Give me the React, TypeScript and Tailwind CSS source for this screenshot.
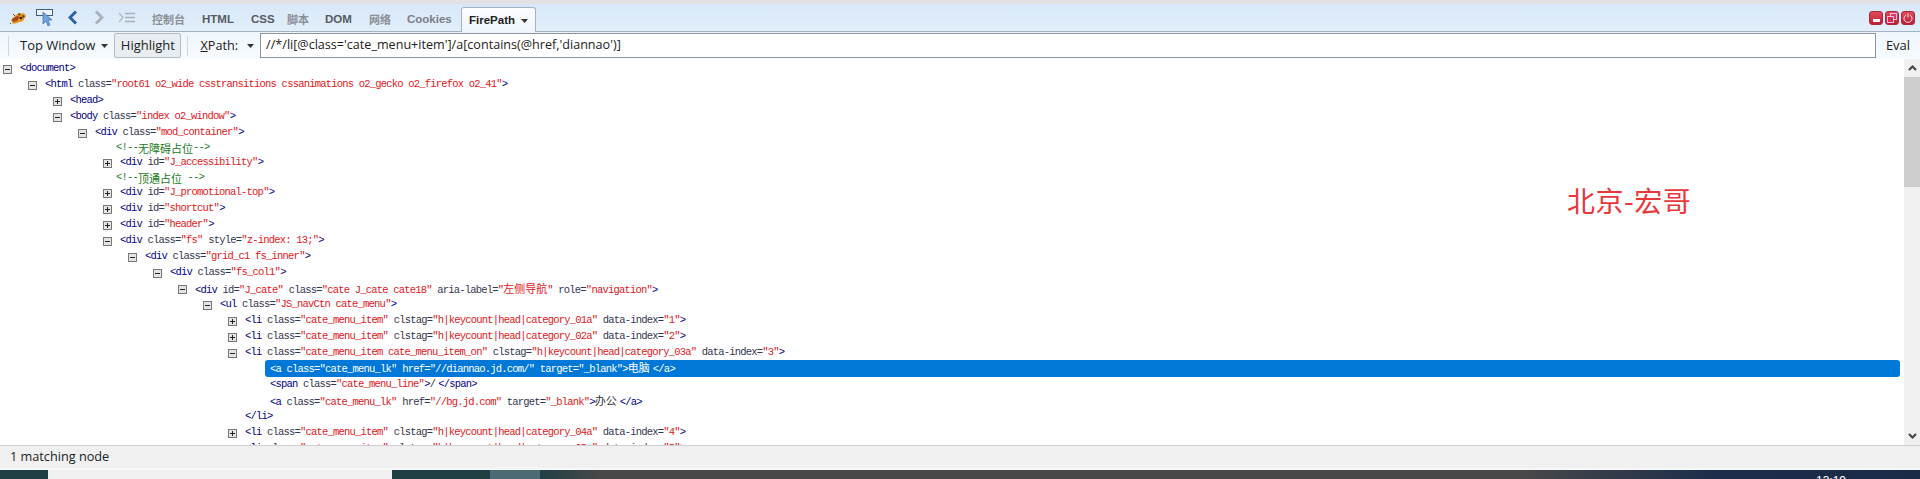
import type { ReactNode } from "react";

const uiFont = "font-['Open_Sans','Noto_Sans_CJK_SC',sans-serif]";

type Row = {
  level: number;
  toggle?: "+" | "-";
  comment?: string;
  name?: string;
  attrs?: [string, string][];
  text?: string;
  closeName?: string;
  selected?: boolean;
};

const rows: Row[] = [
  { level: 0, toggle: "-", name: "document" },
  {
    level: 1,
    toggle: "-",
    name: "html",
    attrs: [["class", "root61 o2_wide csstransitions cssanimations o2_gecko o2_firefox o2_41"]],
  },
  { level: 2, toggle: "+", name: "head" },
  { level: 2, toggle: "-", name: "body", attrs: [["class", "index o2_window"]] },
  { level: 3, toggle: "-", name: "div", attrs: [["class", "mod_container"]] },
  { level: 4, comment: "<!--无障碍占位-->" },
  { level: 4, toggle: "+", name: "div", attrs: [["id", "J_accessibility"]] },
  { level: 4, comment: "<!--顶通占位 -->" },
  { level: 4, toggle: "+", name: "div", attrs: [["id", "J_promotional-top"]] },
  { level: 4, toggle: "+", name: "div", attrs: [["id", "shortcut"]] },
  { level: 4, toggle: "+", name: "div", attrs: [["id", "header"]] },
  { level: 4, toggle: "-", name: "div", attrs: [["class", "fs"], ["style", "z-index: 13;"]] },
  { level: 5, toggle: "-", name: "div", attrs: [["class", "grid_c1 fs_inner"]] },
  { level: 6, toggle: "-", name: "div", attrs: [["class", "fs_col1"]] },
  {
    level: 7,
    toggle: "-",
    name: "div",
    attrs: [["id", "J_cate"], ["class", "cate J_cate cate18"], ["aria-label", "左侧导航"], ["role", "navigation"]],
  },
  { level: 8, toggle: "-", name: "ul", attrs: [["class", "JS_navCtn cate_menu"]] },
  {
    level: 9,
    toggle: "+",
    name: "li",
    attrs: [["class", "cate_menu_item"], ["clstag", "h|keycount|head|category_01a"], ["data-index", "1"]],
  },
  {
    level: 9,
    toggle: "+",
    name: "li",
    attrs: [["class", "cate_menu_item"], ["clstag", "h|keycount|head|category_02a"], ["data-index", "2"]],
  },
  {
    level: 9,
    toggle: "-",
    name: "li",
    attrs: [["class", "cate_menu_item cate_menu_item_on"], ["clstag", "h|keycount|head|category_03a"], ["data-index", "3"]],
  },
  {
    level: 10,
    selected: true,
    name: "a",
    attrs: [["class", "cate_menu_lk"], ["href", "//diannao.jd.com/"], ["target", "_blank"]],
    text: "电脑",
    closeName: "a",
  },
  { level: 10, name: "span", attrs: [["class", "cate_menu_line"]], text: "/", closeName: "span" },
  {
    level: 10,
    name: "a",
    attrs: [["class", "cate_menu_lk"], ["href", "//bg.jd.com"], ["target", "_blank"]],
    text: "办公",
    closeName: "a",
  },
  { level: 9, closeName: "li" },
  {
    level: 9,
    toggle: "+",
    name: "li",
    attrs: [["class", "cate_menu_item"], ["clstag", "h|keycount|head|category_04a"], ["data-index", "4"]],
  },
  {
    level: 9,
    toggle: "+",
    name: "li",
    attrs: [["class", "cate_menu_item"], ["clstag", "h|keycount|head|category_05a"], ["data-index", "5"]],
  },
];

function Cjk({ children }: { children: ReactNode }) {
  return <span className="font-['Noto_Sans_CJK_SC',sans-serif] text-[11px] tracking-normal">{children}</span>;
}

// the reference font is 5.5px wide per latin char, cjk runs need their own span
function mixed(value: string) {
  return value.split(/([\u4e00-\u9fff]+)/).map((part, i) =>
    /[\u4e00-\u9fff]/.test(part) ? <Cjk key={i}>{part}</Cjk> : part,
  );
}

function Toggle({ type }: { type: "+" | "-" }) {
  return (
    <svg width="9" height="9" viewBox="0 0 9 9" className="shrink-0 mr-2">
      <rect x="0.5" y="0.5" width="8" height="8" fill="#e4e4e4" stroke="#777" />
      <path d={type === "+" ? "M2 4.5h5M4.5 2v5" : "M2 4.5h5"} stroke="#222" strokeWidth="1" />
    </svg>
  );
}

function Markup({ row }: { row: Row }) {
  const sel = row.selected;
  const tag = sel ? "text-white" : "text-[#000088]";
  const attr = sel ? "text-white" : "text-[#33364f]";
  const val = sel ? "text-white" : "text-[#e0181c]";
  return (
    <span className="whitespace-pre">
      {row.name && (
        <span className={tag}>
          {"<"}
          {row.name}
        </span>
      )}
      {row.attrs?.map(([k, v]) => (
        <span key={k}>
          <span className={attr}>
            {" "}
            {k}=
          </span>
          <span className={val}>
            "{mixed(v)}"
          </span>
        </span>
      ))}
      {row.name && <span className={tag}>{">"}</span>}
      {row.text && <span className={`pr-[3px] ${sel ? "text-white" : "text-[#333]"}`}>{mixed(row.text)}</span>}
      {row.closeName && (
        <span className={tag}>
          {"</"}
          {row.closeName}
          {">"}
        </span>
      )}
    </span>
  );
}

function TreeRow({ row }: { row: Row }) {
  const left = 3 + row.level * 25;
  if (row.comment) {
    return (
      <div className="h-[14px] flex items-center whitespace-pre text-[#1a7a1a]" style={{ paddingLeft: left + 13 }}>
        {mixed(row.comment)}
      </div>
    );
  }
  if (row.selected) {
    return (
      <div className="h-4 flex items-center">
        <div
          className="h-[17px] flex-1 flex items-center bg-[#0078d7] rounded-[3px] mr-1 pl-[5px] -translate-y-px"
          style={{ marginLeft: left + 12 }}
        >
          <Markup row={row} />
        </div>
      </div>
    );
  }
  return (
    <div className="h-4 flex items-center" style={{ paddingLeft: row.toggle ? left : left + 17 }}>
      {row.toggle && <Toggle type={row.toggle} />}
      <Markup row={row} />
    </div>
  );
}

function FirebugIcon() {
  return (
    <svg width="18" height="14" viewBox="0 0 18 14" className="shrink-0">
      <path d="M2 9 8 3l7-1 2 3-3 5-6 2-4 1z" fill="#e89a1e" />
      <path d="M3 8l5-3 3 1-3 4-4 1z" fill="#a8481a" />
      <path d="M9 2l3 1-2 2zM13 4l3 1-2 2z" fill="#5a3210" />
      <circle cx="12" cy="7" r="1.3" fill="#3a2008" />
      <path d="M4 3l2 2M2 12l-1 1" stroke="#7a4a1a" />
    </svg>
  );
}

function InspectIcon() {
  return (
    <svg width="18" height="18" viewBox="0 0 18 18" className="shrink-0">
      <rect x="0.5" y="0.5" width="16" height="6" fill="#eaf3fb" stroke="#3d5f80" />
      <path d="M7 3v12l3-3 2 5 2-1-2-5h4z" fill="#6fa4e0" stroke="#3f6fa8" strokeWidth="0.7" />
    </svg>
  );
}

function Chevron({ dir, color }: { dir: "left" | "right"; color: string }) {
  return (
    <svg width="10" height="15" viewBox="0 0 10 15" className="shrink-0">
      <path d={dir === "left" ? "M8 1.5 2 7.5l6 6" : "M2 1.5l6 6-6 6"} fill="none" stroke={color} strokeWidth="3" />
    </svg>
  );
}

function CommandIcon() {
  return (
    <svg width="17" height="11" viewBox="0 0 17 11" className="shrink-0">
      <path d="M1 1l4 4.5L1 10" fill="none" stroke="#b5bcc4" strokeWidth="1.4" />
      <path d="M7 1.5h10M7 5.5h10M7 9.5h10" stroke="#a8afb8" strokeWidth="1.4" />
    </svg>
  );
}

function WinButton({ children }: { children: ReactNode }) {
  return (
    <div className="w-[14px] h-[14px] rounded-[3px] border border-[#a8283c] bg-gradient-to-b from-[#e04a5c] to-[#c01c34] flex items-center justify-center">
      {children}
    </div>
  );
}

function Caret({ className }: { className: string }) {
  return (
    <svg width="7" height="4" viewBox="0 0 7 4" className={className}>
      <path d="M0 0h7L3.5 4z" fill="#333" />
    </svg>
  );
}

function Tab({ label, className }: { label: string; className: string }) {
  return <span className={`text-[11.5px] font-bold whitespace-nowrap ${className}`}>{label}</span>;
}

function TabBar() {
  return (
    <div className="h-[28px] flex bg-gradient-to-b from-[#d8e8f8] to-[#e2effb] border-b border-[#a4b2c2] font-['Liberation_Sans','Noto_Sans_CJK_SC',sans-serif]">
      <div className="w-[152px] flex items-center shrink-0 pl-[9px]">
        <FirebugIcon />
        <div className="ml-[9px]">
          <InspectIcon />
        </div>
        <div className="ml-[14px]">
          <Chevron dir="left" color="#2b5fa8" />
        </div>
        <div className="ml-[16px]">
          <Chevron dir="right" color="#a9b1ba" />
        </div>
        <div className="ml-[14px]">
          <CommandIcon />
        </div>
      </div>
      <div className="flex items-center gap-[16px] h-full pt-[5px]">
        <Tab label="控制台" className="text-[#8a8f96] w-[34px] text-[11px]" />
        <Tab label="HTML" className="text-[#555a60] w-[33px]" />
        <Tab label="CSS" className="text-[#555a60] w-[20px]" />
        <Tab label="脚本" className="text-[#8a8f96] w-[22px] text-[11px]" />
        <Tab label="DOM" className="text-[#555a60] w-[28px]" />
        <Tab label="网络" className="text-[#8a8f96] w-[22px] text-[11px]" />
        <Tab label="Cookies" className="text-[#7a7f86] w-[43px]" />
      </div>
      <div className="ml-[11px] mt-[3px] h-[25px] w-[75px] flex items-center gap-[6px] pl-[7px] pt-[2px] bg-gradient-to-b from-[#fbfdff] to-[#eef5fc] border border-b-0 border-[#a4b2c2] rounded-t-[3px] relative z-10">
        <span className="text-[11.5px] font-bold text-[#222]">FirePath</span>
        <Caret className="shrink-0" />
      </div>
      <div className="ml-auto flex items-center gap-[2px] pr-[5px]">
        <WinButton>
          <span className="w-[7px] h-[3px] bg-white mt-[5px]" />
        </WinButton>
        <WinButton>
          <svg width="10" height="10" viewBox="0 0 10 10">
            <rect x="3.5" y="0.5" width="6" height="6" fill="none" stroke="#fbe" />
            <rect x="0.5" y="3.5" width="6" height="6" fill="#d03048" stroke="#fbe" />
          </svg>
        </WinButton>
        <WinButton>
          <svg width="10" height="10" viewBox="0 0 10 10">
            <path d="M3 2a4 4 0 1 0 4 0M5 0.5v4" fill="none" stroke="#fdd" />
          </svg>
        </WinButton>
      </div>
    </div>
  );
}

function Toolbar() {
  return (
    <div className={`h-[27px] flex items-center bg-gradient-to-b from-[#eef5fc] to-[#f8fbfe] text-[13px] text-[#222] ${uiFont}`}>
      <span className="w-px h-[20px] bg-[#cfd8e2] ml-[8px] shrink-0" />
      <span className="ml-[11px] whitespace-nowrap">Top Window</span>
      <Caret className="ml-[6px] shrink-0" />
      <div className="ml-[6px] h-[25px] w-[67px] flex items-center justify-center shrink-0 rounded-[2px] border border-[#b6bcc4] bg-[#e8edf2]">
        Highlight
      </div>
      <span className="w-px h-[20px] bg-[#cfd8e2] ml-[6px] shrink-0" />
      <span className="ml-[12px] text-[12.7px]">
        <span className="underline">X</span>Path:
      </span>
      <Caret className="ml-[9px] shrink-0" />
      <div className="ml-[6px] h-[25px] flex-1 flex items-center bg-white border border-[#8d949c] pl-[5px] whitespace-nowrap text-[12.6px]">
        //*/li[@class='cate_menu+item']/a[contains(@href,'diannao')]
      </div>
      <span className="w-[44px] text-center shrink-0">Eval</span>
    </div>
  );
}

function Scrollbar() {
  return (
    <div className="w-4 shrink-0 flex flex-col bg-[#f0f0f0]">
      <div className="h-[18px] flex items-center justify-center">
        <svg width="9" height="6" viewBox="0 0 9 6">
          <path d="M1 5l3.5-3.5L8 5" fill="none" stroke="#444" strokeWidth="2" />
        </svg>
      </div>
      <div className="h-[110px] bg-[#cdcdcd]" />
      <div className="flex-1" />
      <div className="h-[18px] flex items-center justify-center">
        <svg width="9" height="6" viewBox="0 0 9 6">
          <path d="M1 1l3.5 3.5L8 1" fill="none" stroke="#444" strokeWidth="2" />
        </svg>
      </div>
    </div>
  );
}

function Taskbar() {
  return (
    <div className="h-[9px] flex overflow-hidden">
      <div className="w-[48px] bg-[#1f3f45]" />
      <div className="w-[344px] bg-[#f0f0f0]" />
      <div className="w-[98px] bg-[#1f3f45]" />
      <div className="w-[50px] bg-[#4a6a74]" />
      <div className="w-[60px] bg-gradient-to-r from-[#1f3f45] to-[#484848]" />
      <div className="w-[920px] bg-[#484848]" />
      <div className="flex-1 flex bg-gradient-to-r from-[#484848] via-[#1c2c4a] to-[#1a2b48] relative">
        <span className="absolute left-[296px] top-[5px] text-[12px] leading-none text-white font-['Liberation_Sans',sans-serif]">
          13:19
        </span>
      </div>
    </div>
  );
}

export default function App() {
  return (
    <div className="w-[1920px] h-[479px] flex flex-col overflow-hidden bg-white">
      <div className="h-1 bg-[#e2e2e2]" />
      <TabBar />
      <Toolbar />
      <div className="h-[387px] flex relative border-b border-[#d0d0d0]">
        <div className="flex-1 overflow-hidden pt-[2px] font-['Liberation_Mono','Noto_Sans_CJK_SC',monospace] text-[10.5px] tracking-[-0.8px]">
          {rows.map((row, i) => (
            <TreeRow key={i} row={row} />
          ))}
        </div>
        <Scrollbar />
        <span className="absolute left-[1567px] top-[123px] text-[28px] leading-[36px] tracking-[0.5px] text-[#e8383c] font-['Noto_Sans_CJK_SC',sans-serif]">
          北京-宏哥
        </span>
      </div>
      <div className={`h-[24px] flex items-center pl-[10px] bg-[#f0f0f0] border-b-2 border-[#f6f8fa] text-[12.7px] text-[#222] ${uiFont}`}>
        1 matching node
      </div>
      <Taskbar />
    </div>
  );
}
